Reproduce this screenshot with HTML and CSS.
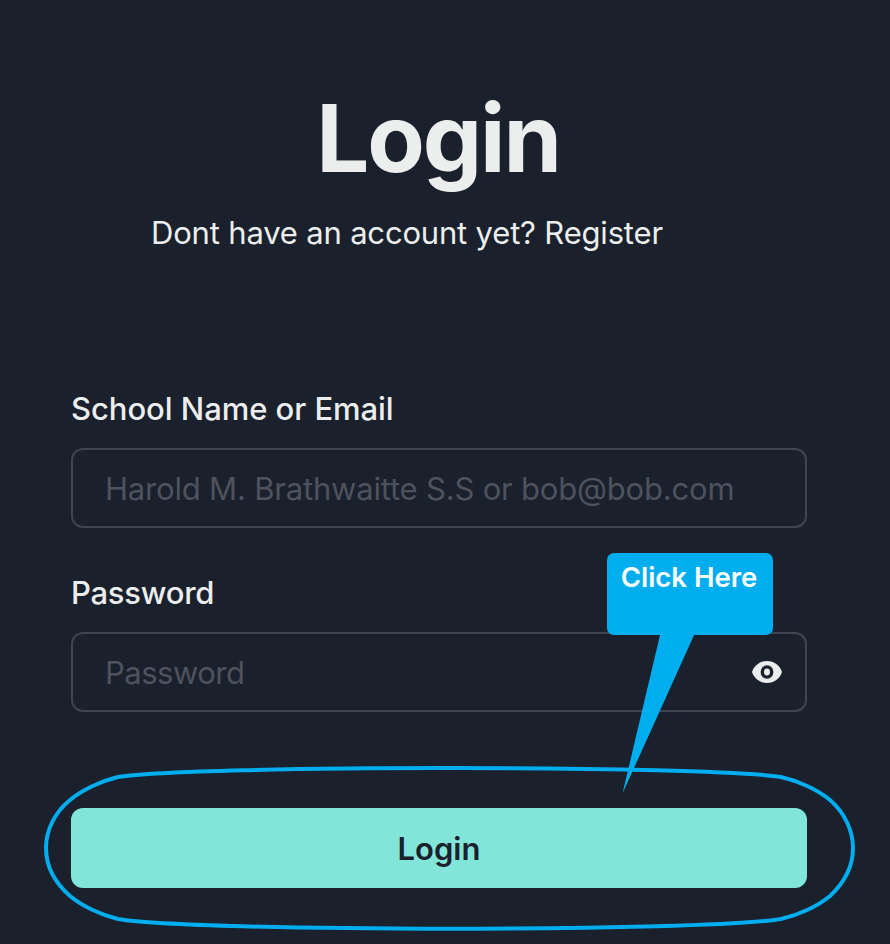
FILE: index.html
```html
<!DOCTYPE html>
<html lang="en">
<head>
<meta charset="utf-8">
<title>Login</title>
<link rel="stylesheet" href="styles.css">
</head>
<body>
<main class="page">
  <h1 class="title"><span>Login</span></h1>
  <p class="subtitle"><span>Dont have an account yet? Register</span></p>
  <form class="form">
    <label class="label"><span>School Name or Email</span></label>
    <div class="field"><span>Harold M. Brathwaitte S.S or bob@bob.com</span></div>
    <label class="label second"><span>Password</span></label>
    <div class="field password"><span>Password</span>
      <svg class="eye" viewBox="0 0 30 24"><path d="M15 1C8 1 2 5.500 0 12c2 6.500 8 11 15 11s13-4.500 15-11C28 5.500 22 1 15 1z" fill="#eceeed"/><ellipse cx="15" cy="12" rx="4.700" ry="5.100" fill="none" stroke="#1a202c" stroke-width="3.400"/></svg>
    </div>
    <button class="submit" type="button"><span>Login</span></button>
  </form>
  <svg class="marks" viewBox="0 0 890 944">
    <path class="ring" d="M118 777C195 765 705 765 781 777C799 781 818 790 830 800C845 813 853 831 853 848C853 865 845 882 830 896C818 906 799 915 781 919C705 932 195 932 118 919C101 915 82 906 70 896C54 882 46 865 46 848C46 831 54 813 70 800C82 790 101 781 118 777Z"/>
    <path class="tail" d="M660.500 633H695L622.500 793.500Z"/>
  </svg>
  <div class="callout"><span>Click Here</span></div>
</main>
</body>
</html>
```
FILE: styles.css
```css
*{box-sizing:border-box}
body{margin:0;background:#1a202c;color:#eceeed;font-family:Inter,"Liberation Sans",sans-serif}
.page{position:relative;width:890px;height:944px;overflow:hidden;padding:82px 83px 0 71px}
.title{margin:0;height:112px;line-height:112px;font-size:94px;font-weight:700;text-align:center;letter-spacing:-2.1px;padding-right:2px}
.subtitle{margin:15px 0 0 80px;height:48px;line-height:47px;font-size:31px;letter-spacing:-.18px;white-space:nowrap}
.form{margin-top:128px}
.label{display:block;height:48px;line-height:47px;font-size:31px;font-weight:500;letter-spacing:-.05px;white-space:nowrap}
.field{display:flex;align-items:center;justify-content:space-between;height:80px;margin-top:15px;padding:1px 23px 0 32px;border:2px solid #40444f;border-radius:12px;color:#4e525d;font-size:31px;letter-spacing:-.19px;white-space:nowrap}
.password{letter-spacing:-.5px}
.second{margin-top:41px;letter-spacing:-.25px}
.eye{width:30px;height:24px;margin-bottom:1px}
.submit{display:block;width:100%;height:80px;margin-top:96px;padding:0;border:0;border-radius:12px;background:#81e6d9;color:#1a202c;font:600 31px Inter,sans-serif}
.marks{position:absolute;inset:0;width:890px;height:944px}
.ring{fill:none;stroke:#00aeef;stroke-width:4}
.tail{fill:#00aeef}
.callout{position:absolute;left:607px;top:553px;width:166px;height:82px;padding-right:2px;border-radius:7px;background:#00aeef;color:#fff;text-align:center;font-size:27.5px;font-weight:600;line-height:49px}
```
